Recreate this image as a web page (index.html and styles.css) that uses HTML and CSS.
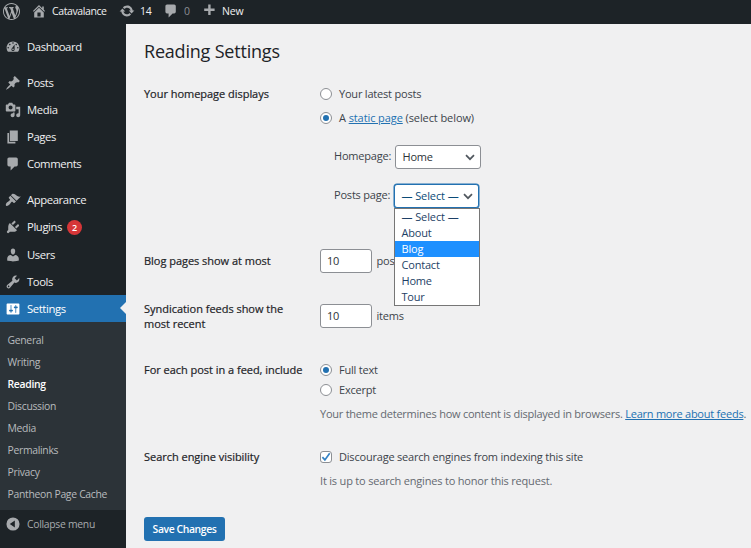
FILE: index.html
```html
<!DOCTYPE html>
<html lang="en">
<head>
<meta charset="utf-8">
<title>Reading Settings</title>
<link rel="stylesheet" href="styles.css">
</head>
<body>
<header class="bar">
  <svg class="wp" viewBox="0 0 20 20"><path d="M20 10c0-5.51-4.49-10-10-10C4.48 0 0 4.49 0 10c0 5.52 4.48 10 10 10 5.51 0 10-4.48 10-10zM7.78 15.37L4.37 6.22c.55-.02 1.17-.08 1.17-.08.5-.06.44-1.13-.06-1.11 0 0-1.45.11-2.37.11-.18 0-.37 0-.58-.01C4.12 2.69 6.87 1.11 10 1.11c2.33 0 4.45.87 6.05 2.34-.68-.11-1.65.39-1.65 1.58 0 .74.45 1.36.9 2.1.35.61.55 1.36.55 2.46 0 1.49-1.4 5-1.4 5l-3.03-8.37c.54-.02.82-.17.82-.17.5-.05.44-1.25-.06-1.22 0 0-1.44.12-2.38.12-.87 0-2.33-.12-2.33-.12-.5-.03-.56 1.2-.06 1.22l.92.08 1.26 3.41zM17.41 10c.24-.64.74-1.87.43-4.25.7 1.29 1.05 2.71 1.05 4.25 0 3.29-1.73 6.24-4.4 7.78.97-2.59 1.94-5.2 2.92-7.78zM6.1 18.09C3.12 16.65 1.11 13.53 1.11 10c0-1.3.23-2.48.72-3.59C3.25 10.3 4.67 14.2 6.1 18.09zm4.03-6.63l2.58 6.98c-.86.29-1.76.45-2.71.45-.79 0-1.57-.11-2.29-.33.81-2.38 1.62-4.74 2.42-7.1z"/></svg>
  <a class="bar-site"><svg viewBox="0 0 20 20"><path d="M16 8.5l1.53 1.53-1.06 1.06L10 4.6l-6.47 6.49-1.06-1.06L10 2.5l4 4v-2h2v4zm-6-2.46l6 5.99V18H4v-5.97zM12 17v-5H8v5h4z"/></svg><span>Catavalance</span></a>
  <a class="bar-updates"><svg viewBox="0 0 20 20"><path d="M10.2 3.28c3.53 0 6.43 2.61 6.92 6h2.08l-3.5 4-3.5-4h2.32c-.45-1.97-2.21-3.45-4.32-3.45-1.45 0-2.73.71-3.54 1.78L4.95 5.66C6.23 4.2 8.11 3.28 10.2 3.28zm-.4 13.44c-3.52 0-6.43-2.61-6.92-6H.8l3.5-4c1.17 1.33 2.33 2.67 3.5 4H5.48c.45 1.97 2.21 3.45 4.32 3.45 1.45 0 2.73-.71 3.54-1.78l1.71 1.95c-1.28 1.46-3.15 2.38-5.25 2.38z"/></svg><span>14</span></a>
  <a class="bar-comments"><svg viewBox="0 0 20 20"><path d="M5 2h9c1.1 0 2 .9 2 2v7c0 1.1-.9 2-2 2h-2l-5 5v-5H5c-1.1 0-2-.9-2-2V4c0-1.1.9-2 2-2z"/></svg><span>0</span></a>
  <a class="bar-new"><svg viewBox="0 0 20 20"><path d="M17 7v3h-5v5H9v-5H4V7h5V2h3v5h5z"/></svg><span>New</span></a>
</header>
<div class="shell">
<nav class="side">
  <a class="item gap"><svg viewBox="0 0 20 20"><path fill-rule="evenodd" d="M3.76 16h12.48c1.1-1.37 1.76-3.11 1.76-5 0-4.42-3.58-8-8-8s-8 3.58-8 8c0 1.89.66 3.63 1.76 5zM10 4c.55 0 1 .45 1 1s-.45 1-1 1-1-.45-1-1 .45-1 1-1zM6 6c.55 0 1 .45 1 1s-.45 1-1 1-1-.45-1-1 .45-1 1-1zm8 0c.55 0 1 .45 1 1s-.45 1-1 1-1-.45-1-1 .45-1 1-1zm-5.37 5.55L12 7v6c0 1.1-.9 2-2 2s-2-.9-2-2c0-.57.24-1.08.63-1.45zM4 10c.55 0 1 .45 1 1s-.45 1-1 1-1-.45-1-1 .45-1 1-1zm12 0c.55 0 1 .45 1 1s-.45 1-1 1-1-.45-1-1 .45-1 1-1zm-5 3c0-.55-.45-1-1-1s-1 .45-1 1 .45 1 1 1 1-.45 1-1z"/></svg><span>Dashboard</span></a>
  <a class="item"><svg viewBox="0 0 20 20"><path d="M10.44 3.02l1.82-1.82 6.36 6.35-1.83 1.82c-1.05-.68-2.48-.57-3.41.36l-.75.75c-.92.93-1.04 2.35-.35 3.41l-1.83 1.82-2.41-2.41-2.8 2.79c-.42.42-3.38 2.71-3.8 2.29s1.86-3.39 2.28-3.81l2.79-2.79L4.1 9.36l1.83-1.82c1.05.69 2.48.57 3.4-.36l.75-.75c.93-.92 1.05-2.35.36-3.41z"/></svg><span>Posts</span></a>
  <a class="item"><svg viewBox="0 0 20 20"><path fill-rule="evenodd" d="M13 11V4c0-.55-.45-1-1-1h-1.67L9 1H5L3.67 3H2c-.55 0-1 .45-1 1v7c0 .55.45 1 1 1h10c.55 0 1-.45 1-1zM7 4.5c1.38 0 2.5 1.12 2.5 2.5S8.38 9.5 7 9.5 4.5 8.38 4.5 7 5.62 4.5 7 4.5zM14 6h5v10.5c0 1.38-1.12 2.5-2.5 2.5S14 17.88 14 16.5s1.12-2.5 2.5-2.5c.17 0 .34.02.5.05V9h-3V6zm-4 8.05V13h2v3.5c0 1.38-1.12 2.5-2.5 2.5S7 17.88 7 16.5 8.12 14 9.5 14c.17 0 .34.02.5.05z"/></svg><span>Media</span></a>
  <a class="item"><svg viewBox="0 0 20 20"><path d="M6 15V2h10v13H6zm-1 1h8v2H3V5h2v11z"/></svg><span>Pages</span></a>
  <a class="item gap"><svg viewBox="0 0 20 20"><path d="M5 2h9c1.1 0 2 .9 2 2v7c0 1.1-.9 2-2 2h-2l-5 5v-5H5c-1.1 0-2-.9-2-2V4c0-1.1.9-2 2-2z"/></svg><span>Comments</span></a>
  <a class="item"><svg viewBox="0 0 20 20"><path d="M14.48 11.06L7.41 3.99l1.5-1.5c.5-.56 2.3-.47 3.51.32 1.21.8 1.43 1.28 2.91 2.1 1.18.64 2.45 1.26 4.45.85zm-.71.71L6.7 4.7 4.93 6.47c-.39.39-.39 1.02 0 1.41l1.06 1.06c.39.39.39 1.03 0 1.42-.6.6-1.43 1.11-2.21 1.69-.35.26-.7.53-1.01.84C1.43 14.23.4 16.08 1.4 17.07c.99 1 2.84-.03 4.18-1.36.31-.31.58-.66.85-1.02.57-.78 1.08-1.61 1.69-2.21.39-.39 1.02-.39 1.41 0l1.06 1.06c.39.39 1.02.39 1.41 0z"/></svg><span>Appearance</span></a>
  <a class="item"><svg viewBox="0 0 20 20"><path d="M13.11 4.36L9.87 7.6 8 5.73l3.24-3.24c.35-.34 1.05-.2 1.56.32.52.51.66 1.21.31 1.55zm-8 1.77l.91-1.12 9.01 9.01-1.19.84c-.71.71-2.63 1.16-3.82 1.16H6.14L4.9 17.26c-.59.59-1.54.59-2.12 0-.59-.58-.59-1.53 0-2.12l1.24-1.24v-3.88c0-1.13.4-3.19 1.09-3.89zm7.26 3.97l3.24-3.24c.34-.35 1.04-.21 1.55.31.52.51.66 1.21.31 1.55l-3.24 3.25z"/></svg><span>Plugins</span><b class="count">2</b></a>
  <a class="item"><svg viewBox="0 0 20 20"><path d="M10 9.25c-2.27 0-2.73-3.44-2.73-3.44C7 4.02 7.82 2 9.97 2c2.16 0 2.98 2.02 2.71 3.81 0 0-.41 3.44-2.68 3.44zm0 2.57L12.72 10c2.39 0 4.52 2.33 4.52 4.53v2.49s-3.65 1.13-7.24 1.13c-3.65 0-7.24-1.13-7.24-1.13v-2.49c0-2.25 1.94-4.48 4.47-4.48z"/></svg><span>Users</span></a>
  <a class="item"><svg viewBox="0 0 20 20"><path fill-rule="evenodd" d="M16.68 9.77c-1.34 1.34-3.3 1.67-4.95.99l-5.41 6.52c-.99.99-2.59.99-3.58 0s-.99-2.59 0-3.57l6.52-5.42c-.68-1.65-.35-3.61.99-4.95 1.28-1.28 3.12-1.62 4.72-1.06l-2.89 2.89 2.82 2.82 2.86-2.87c.53 1.58.18 3.39-1.08 4.65zM3.81 16.21c.4.39 1.04.39 1.43 0 .4-.4.4-1.04 0-1.43-.39-.4-1.03-.4-1.43 0-.39.39-.39 1.03 0 1.43z"/></svg><span>Tools</span></a>
  <a class="item current"><svg viewBox="0 0 20 20"><path fill-rule="evenodd" d="M18 16V4c0-.55-.45-1-1-1H3c-.55 0-1 .45-1 1v12c0 .55.45 1 1 1h14c.55 0 1-.45 1-1zM8 11h1c.55 0 1 .45 1 1s-.45 1-1 1H8v1.5c0 .28-.22.5-.5.5s-.5-.22-.5-.5V13H6c-.55 0-1-.45-1-1s.45-1 1-1h1V5.5c0-.28.22-.5.5-.5s.5.22.5.5V11zm5-2h-1c-.55 0-1-.45-1-1s.45-1 1-1h1V5.5c0-.28.22-.5.5-.5s.5.22.5.5V7h1c.55 0 1 .45 1 1s-.45 1-1 1h-1v5.5c0 .28-.22.5-.5.5s-.5-.22-.5-.5V9z"/></svg><span>Settings</span></a>
  <div class="sub">
    <a>General</a><a>Writing</a><a class="on">Reading</a><a>Discussion</a><a>Media</a><a>Permalinks</a><a>Privacy</a><a>Pantheon Page Cache</a>
  </div>
  <a class="item collapse"><svg viewBox="0 0 20 20"><path fill-rule="evenodd" d="M10 1.8a8.2 8.2 0 1 0 0 16.4a8.2 8.2 0 1 0 0-16.4zM12.3 5.6v8.8L6 10z"/></svg><span>Collapse menu</span></a>
</nav>
<main class="main">
  <h1>Reading Settings</h1>
  <section class="row home">
    <h2>Your homepage displays</h2>
    <div class="field">
      <label class="opt"><i class="radio"></i><span>Your latest posts</span></label>
      <label class="opt second"><i class="radio checked"></i><span>A <a class="link">static page</a> (select below)</span></label>
      <div class="pick"><span class="pick-label">Homepage:</span><div class="select"><span>Home</span><svg viewBox="0 0 10 7"><path d="M1 1.2l4 4 4-4"/></svg></div></div>
      <div class="pick posts"><span class="pick-label">Posts page:</span>
        <div class="select open"><span>— Select —</span><svg viewBox="0 0 10 7"><path d="M1 1.2l4 4 4-4"/></svg>
          <div class="menu"><span>— Select —</span><span>About</span><span class="hot">Blog</span><span>Contact</span><span>Home</span><span>Tour</span></div>
        </div></div>
    </div>
  </section>
  <section class="row blog"><h2>Blog pages show at most</h2><div class="field num"><div class="input">10</div><span>posts</span></div></section>
  <section class="row synd"><h2>Syndication feeds show the<br>most recent</h2><div class="field num"><div class="input">10</div><span>items</span></div></section>
  <section class="row feed"><h2>For each post in a feed, include</h2>
    <div class="field">
      <label class="opt"><i class="radio checked"></i><span>Full text</span></label>
      <label class="opt"><i class="radio"></i><span>Excerpt</span></label>
      <p class="help">Your theme determines how content is displayed in browsers. <a class="link">Learn more about feeds</a>.</p>
    </div></section>
  <section class="row search"><h2>Search engine visibility</h2>
    <div class="field">
      <label class="opt"><i class="check"><svg viewBox="0 0 12 12"><path d="M2.4 6.2l2.5 2.7 4.8-6.6"/></svg></i><span>Discourage search engines from indexing this site</span></label>
      <p class="help">It is up to search engines to honor this request.</p>
    </div></section>
  <button class="save">Save Changes</button>
</main>
</div>
</body>
</html>
```
FILE: styles.css
```css
* { box-sizing: border-box; }
body { margin: 0; width: 751px; height: 548px; overflow: hidden; background: #f0f0f1; color: #3c434a; font: 11px/16px "Open Sans", "Noto Sans", sans-serif; letter-spacing: -.2px; }
svg { display: block; flex: none; fill: #a7aaad; }
.bar { height: 24px; background: #1d2327; display: flex; align-items: center; color: #f0f0f1; padding-bottom: 2px; font-size: 10.5px; letter-spacing: -.4px; }
.bar a { display: flex; align-items: center; gap: 5px; }
.bar svg { width: 16px; height: 16px; }
.bar .wp { margin-left: 3px; width: 17px; height: 17px; }
.bar-site { margin-left: 11px; }
.bar-site span { width: 56px; }
.bar-updates { margin-left: 11px; }
.bar-updates span { width: 12px; letter-spacing: -.2px; }
.bar-comments { margin-left: 11px; }
.bar-comments span { color: #8c8f94; width: 6px; }
.bar-new { margin-left: 11px; }
.bar-new span { letter-spacing: -.2px; }
.shell { display: flex; height: 524px; }
.side { width: 126px; flex: none; background: #1d2327; padding-top: 9px; }
.item { height: 27.15px; display: flex; align-items: center; color: #f0f0f1; padding-left: 5px; font-size: 11.3px; letter-spacing: -.4px; }
.item svg { width: 16px; height: 16px; margin-right: 6px; }
.item.gap { margin-bottom: 9px; }
.count { width: 15px; height: 15px; margin-left: 5px; border-radius: 50%; background: #d63638; color: #fff; font-size: 9px; line-height: 15px; text-align: center; font-weight: 600; letter-spacing: 0; }
.current { background: #2271b1; color: #fff; position: relative; }
.current svg { fill: #fff; }
.current::after { content: ""; position: absolute; right: 0; top: 7.2px; border: 6.4px solid transparent; border-left: 0; border-right-color: #f0f0f1; }
.sub { background: #2c3338; height: 188px; padding-top: 6.5px; }
.sub a { display: block; height: 22px; line-height: 22px; padding-left: 7.5px; color: #b8bbbe; font-size: 10.4px; letter-spacing: -.3px; }
.sub .on { color: #fff; font-weight: 600; }
.collapse { color: #a7aaad; font-size: 10.4px; letter-spacing: -.3px; }
.main { flex: 1; padding: 14px 0 0 18px; }
h1 { margin: 0; font-size: 18px; line-height: 26px; font-weight: 400; color: #1d2327; letter-spacing: -.2px; }
h2 { margin: 0; width: 176px; flex: none; font-size: 11px; line-height: 15px; font-weight: 500; color: #1d2327; white-space: nowrap; letter-spacing: -.03px; -webkit-text-stroke: .2px #1d2327; }
.row { display: flex; }
.home { margin-top: 22px; height: 163px; }
.field { white-space: nowrap; }
.opt { display: flex; align-items: center; height: 20px; gap: 7px; }
.home .opt { height: 16px; }
.home .second { margin-top: 8px; letter-spacing: -.09px; }
.radio, .check { display: flex; width: 12px; height: 12px; border: 1px solid #8c8f94; background: #fff; border-radius: 50%; flex: none; align-items: center; justify-content: center; }
.check { border-radius: 3px; }
.check svg { width: 12px; height: 12px; flex: none; fill: none; stroke: #3582c4; stroke-width: 1.7; }
.checked::after { content: ""; width: 6px; height: 6px; border-radius: 50%; background: #2271b1; }
.link { color: #2271b1; text-decoration: underline; }
.pick { display: flex; align-items: center; margin: 19px 0 0 14px; height: 24px; }
.pick.posts { margin-top: 15px; }
.pick-label { width: 61px; padding-bottom: 2px; }
.posts .pick-label { width: 60px; }
.select { position: relative; width: 86px; height: 24px; border: 1px solid #8c8f94; border-radius: 3px; background: #fff; color: #2c3338; display: flex; align-items: center; justify-content: space-between; padding: 0 5px 0 6.5px; }
.select svg { width: 10px; height: 7px; fill: none; stroke: #50575e; stroke-width: 1.7; }
.open { width: 85px; border-color: #2271b1; box-shadow: 0 0 0 .5px #2271b1; color: #0a4b78; }
.open > span, .menu span:first-child { letter-spacing: -.1px; }
.menu { position: absolute; z-index: 2; left: -1px; top: 23px; width: 86px; height: 98px; border: 1px solid #767676; background: #fff; color: #1d3f66; }
.menu span { display: block; height: 16px; line-height: 16px; padding-left: 6.5px; }
.menu .hot { background: #1e90ff; color: #fff; }
.num { display: flex; align-items: center; gap: 4.5px; height: 24px; }
.input { width: 52px; height: 24px; border: 1px solid #8c8f94; border-radius: 3px; background: #fff; line-height: 22px; padding-left: 6px; color: #2c3338; }
.blog { height: 55px; }
.blog h2 { margin-top: 4px; }
.synd { height: 56px; }
.synd h2 { margin-top: -3px; }
.feed { height: 87px; }
.feed h2 { margin-top: 2px; }
.help { margin: 6px 0 0; line-height: 16px; color: #646970; letter-spacing: -.24px; }
.search { height: 70px; }
.search .help { letter-spacing: -.19px; }
.search h2 { margin-top: 2px; }
.save { height: 24px; width: 81px; border: 0; border-radius: 3px; background: #2271b1; color: #fff; font: 600 10.4px/24px "Open Sans", sans-serif; letter-spacing: -.4px; padding: 0; text-align: center; display: block; }
```
